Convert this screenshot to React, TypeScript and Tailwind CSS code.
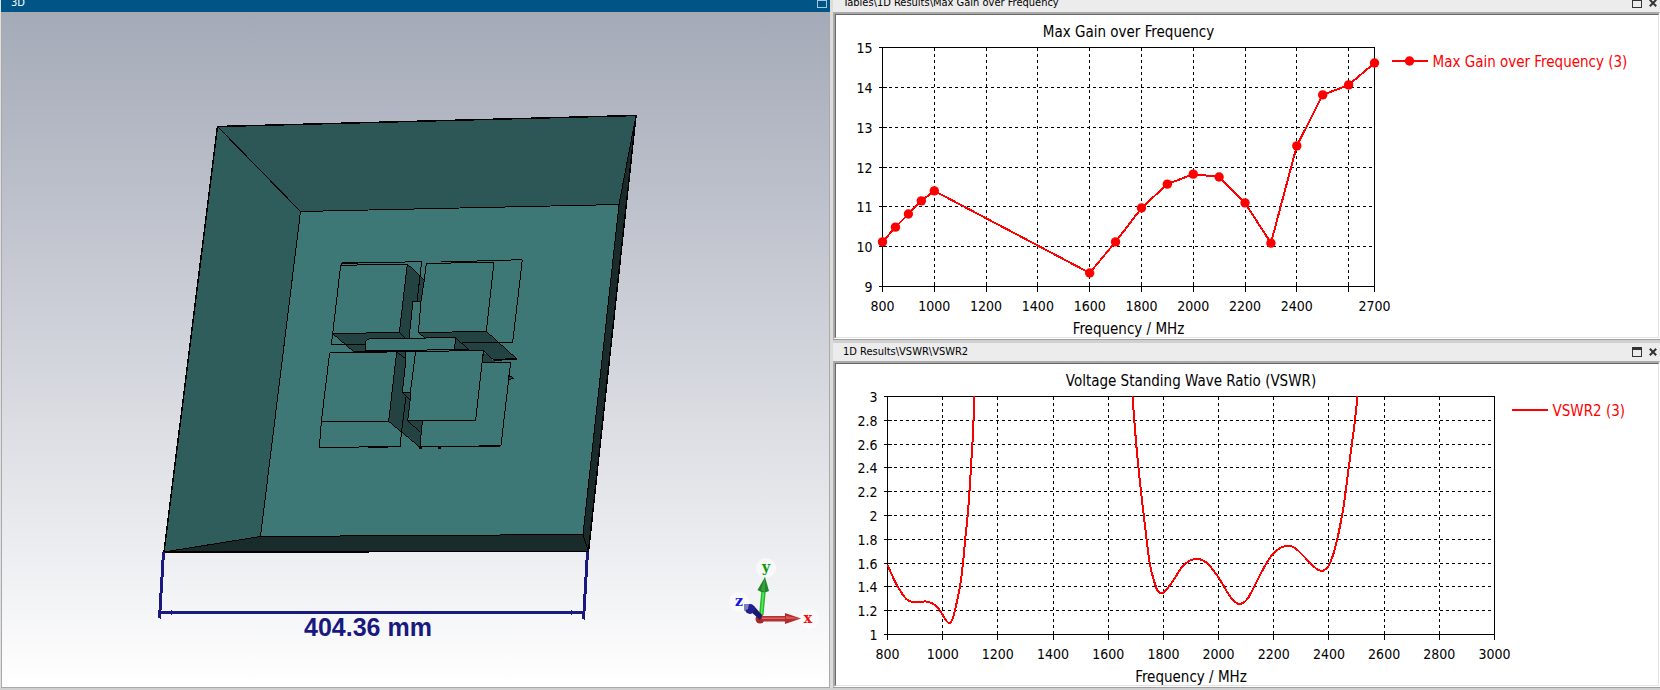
import type { ReactNode } from 'react';

type Point = [number, number];

interface ChartProps {
  title: string;
  legend: string;
  height: number;
  left: number;
  right: number;
  bottom: number;
  xRange: Point;
  yRange: Point;
  xGrid: number[];
  xLabels: number[];
  yTicks: number[];
  samples?: Point[];
  traces?: Point[][];
}

const TOP = 32.5;

const gainSamples: Point[] = [
  [800, 10.12], [850, 10.49], [900, 10.82], [950, 11.15], [1000, 11.4],
  [1600, 9.34], [1700, 10.12], [1800, 10.97], [1900, 11.57], [2000, 11.82],
  [2100, 11.75], [2200, 11.1], [2300, 10.09], [2400, 12.53], [2500, 13.81],
  [2600, 14.06], [2700, 14.61],
];

// VSWR traces, already in chart units
const vswrTraces: Point[][] = [
  [
    [51.5, 201], [59, 217.5], [66, 229.5], [71.5, 236], [77.5, 238], [84, 238],
    [90, 237.5], [97.5, 240], [104, 246.5], [109, 255], [113, 259], [116, 256],
    [119, 246], [124, 222.5], [127, 199], [129.5, 172.5], [132, 147.5],
    [134.2, 116], [136.6, 76], [138.5, 32.5],
  ],
  [
    [296.5, 32.5], [298.5, 59], [301, 89], [304, 119], [307.5, 149], [311, 179],
    [314, 201], [317.5, 215], [321, 225.5], [324, 229], [327, 229], [331, 225],
    [337.5, 216], [346, 203], [353, 197], [360.5, 195], [366, 196], [372.5, 200.5],
    [382.5, 213.5], [392.5, 230], [399, 238], [404.5, 240], [411, 235.5],
    [417.5, 224], [427.5, 204.5], [436, 191], [444, 184], [452.5, 182],
    [459, 184], [467.5, 192], [476, 201], [482.5, 206], [487.5, 206.5],
    [492.5, 202], [497.5, 189.5], [502.5, 169.5], [507.5, 143], [511.5, 113],
    [515.5, 83], [519, 56], [521.5, 32.5],
  ],
];

const range = (from: number, to: number, step: number) =>
  Array.from({ length: Math.round((to - from) / step) + 1 }, (_, i) => Number((from + i * step).toFixed(1)));

const snap = (v: number) => Math.round(v - 0.5) + 0.5;

// Catmull-Rom spline through the points
function smoothPath(points: Point[]) {
  return points.reduce((d, p, i) => {
    if (i === 0) return `M${p[0]} ${p[1]}`;
    const a = points[Math.max(i - 2, 0)];
    const b = points[i - 1];
    const c = points[Math.min(i + 1, points.length - 1)];
    return `${d}C${b[0] + (p[0] - a[0]) / 6} ${b[1] + (p[1] - a[1]) / 6} ${p[0] - (c[0] - b[0]) / 6} ${p[1] - (c[1] - b[1]) / 6} ${p[0]} ${p[1]}`;
  }, '');
}

function Chart({ title, legend, height, left, right, bottom, xRange, yRange, xGrid, xLabels, yTicks, samples, traces }: ChartProps) {
  const sx = (v: number) => left + ((v - xRange[0]) / (xRange[1] - xRange[0])) * (right - left);
  const sy = (v: number) => bottom - ((v - yRange[0]) / (yRange[1] - yRange[0])) * (bottom - TOP);
  const middle = (left + right) / 2;

  return (
    <svg
      viewBox={`0 0 822 ${height}`}
      role="img"
      aria-label={title}
      className="block h-auto w-full font-['DejaVu_Sans_Condensed','DejaVu_Sans',sans-serif] text-[14px]"
    >
      <g textAnchor="middle" className="text-[15px]">
        <text x={middle} y={22}>{title}</text>
        <text x={middle} y={bottom + 47}>Frequency / MHz</text>
      </g>

      <g stroke="#000" strokeWidth="1" fill="none" shapeRendering="crispEdges">
        {xGrid.map((v) => (
          <g key={v}>
            <path d={`M${snap(sx(v))} ${TOP}V${bottom}`} strokeDasharray="3 3" />
            <path d={`M${snap(sx(v))} ${bottom - 4}V${bottom + 5}`} />
          </g>
        ))}
        {yTicks.map((v) => (
          <g key={v}>
            <path d={`M${left} ${snap(sy(v))}H${right}`} strokeDasharray="3 3" />
            <path d={`M${left - 4} ${snap(sy(v))}H${left + 4}`} />
          </g>
        ))}
        <path d={`M${left} ${TOP}H${right}V${bottom}H${left}Z`} />
        <path d={`M${left} ${bottom}v5M${right} ${bottom}v5`} />
      </g>

      <g textAnchor="end">
        {yTicks.map((v) => (
          <text key={v} x={left - 10} y={snap(sy(v)) + 5.5}>{v}</text>
        ))}
      </g>
      <g textAnchor="middle">
        {xLabels.map((v) => (
          <text key={v} x={sx(v)} y={bottom + 24.5}>{v}</text>
        ))}
      </g>

      <g stroke="#f00" strokeWidth="2" fill="none" strokeLinejoin="round" shapeRendering="crispEdges">
        {samples && <polyline points={samples.map(([x, y]) => `${sx(x)},${sy(y)}`).join(' ')} />}
        {traces?.map((t) => <path key={t[0][0]} d={smoothPath(t)} />)}
        <path d={`M${right + 17} ${TOP + 13.5}h36`} />
      </g>
      <g fill="#f00">
        {samples?.map(([x, y]) => <circle key={x} cx={sx(x)} cy={sy(y)} r="4.7" />)}
        {samples && <circle cx={right + 35} cy={TOP + 13.5} r="4.7" />}
        <text x={right + 58} y={TOP + 19.5} className="text-[15px]">{legend}</text>
      </g>
    </svg>
  );
}

function MaximizeIcon() {
  return (
    <svg viewBox="0 0 10 10" className="h-[10px] w-[10px]" shapeRendering="crispEdges" aria-hidden="true">
      <path d="M.5 .5h9v9h-9z" fill="none" stroke="currentColor" />
      <path d="M0 0h10v3H0z" fill="currentColor" />
    </svg>
  );
}

function CloseIcon() {
  return (
    <svg viewBox="0 0 8 8" className="h-2 w-2" aria-hidden="true">
      <path d="M.8 .8l6.4 6.4M7.2 .8L.8 7.2" stroke="currentColor" strokeWidth="2" />
    </svg>
  );
}

function ResultPanel({ path, clipped, children }: { path: string; clipped?: boolean; children: ReactNode }) {
  return (
    <section className="border-b border-[#a0a0a0]">
      <header className={clipped ? 'flex h-3 items-end overflow-hidden bg-[#ececec]' : 'flex h-[18px] items-end bg-[#ececec]'}>
        <div className="flex h-[18px] w-full shrink-0 items-center justify-between pr-[3px] pl-[10px]">
          <h2 className="text-[11px] leading-4">{path}</h2>
          <div className="flex items-center gap-[7px] text-[#333]">
            <button type="button" aria-label="Maximize"><MaximizeIcon /></button>
            <button type="button" aria-label="Close"><CloseIcon /></button>
          </div>
        </div>
      </header>
      <div className="border-t-2 border-r border-b border-l-2 border-[#a9a9a9] border-r-white border-b-white">
        <div className="border border-[#e3e3e3] border-t-[#696969] border-l-[#696969] bg-white">{children}</div>
      </div>
    </section>
  );
}

function Antenna() {
  return (
    <g transform="translate(300 240) scale(.33333)" stroke="#000" strokeWidth="3" fill="none" shapeRendering="crispEdges">
      {/* dark side walls */}
      <g fill="#234343" stroke="none">
        <path d="M322 72L373 120L363 184H339L327 295H316L298 277Z" />
        <path d="M98 281L298 277L316 294L207 296L197 304V334H160Z" />
        <path d="M355 278L559 274L652 358L582 361L550 332L463 330L467 293H375Z" />
        <path d="M550 335L586 366H548Z" />
        <path d="M290 334H318V357L307 458H331V480L323 542H367L360 622L266 544Z" />
        <path d="M627 405L643 416L626 418Z" />
      </g>

      {/* upper left patch */}
      <path d="M124 76L322 72L298 277L98 281L122 76L126 70L365 65L351 184" />
      <path d="M126 68L290 67" />
      <path d="M322 72L373 120M359 105V135M298 277L316 294M98 281L94 313H197M98 281L160 334" />

      {/* upper right patch */}
      <path d="M379 70L455 69L582 67L559 274L355 278L363 184L373 120Z" />
      <path d="M424 66L602 61L667 59L638 307H487" />
      <path d="M355 278L375 294M559 274L652 358L582 361L550 332" />
      <path d="M582 359L652 357" strokeWidth="5" />

      {/* crossing bars */}
      <path d="M363 184H339L327 295" />
      <path d="M207 296L467 293L463 329L385 330L197 332V304Z" fill="#3d7877" />
      <path d="M385 329H463M467 293L506 329M463 329L504 330" />
      <path d="M160 334H347L550 332" />
      <path d="M318 334V357L307 458H331L347 334M307 458L331 480M331 458V480" />

      {/* lower left patch */}
      <path d="M89 338L262 337M290 336L266 544H64L89 338M290 336L318 357" />
      <path d="M64 544L58 622L300 620L304 580L318 470M266 544L360 622" />
      <path d="M204 621H264" strokeWidth="5" />

      {/* lower right patch */}
      <path d="M550 332L527 541L323 542L333 460M550 332L548 367H632L603 616L538 619H360L367 543M323 542L361 577" />
      <path d="M538 618H600M358 624H366M415 624H422" strokeWidth="5" />
      <path d="M627 405L643 416L626 418Z" />
    </g>
  );
}

function AxisTriad() {
  return (
    <g>
      <g fill="#fff" fillOpacity=".55">
        <circle cx="766" cy="568" r="10" />
        <circle cx="739" cy="602" r="10" />
        <circle cx="809" cy="619" r="10" />
      </g>
      <circle cx="760" cy="619" r="4.5" fill="#a62a2a" />
      <path d="M762 616h25v5.500h-25z" fill="#b23030" />
      <path d="M762 617.500h25v1.500h-25z" fill="#e06060" />
      <path d="M785 613L801 618.500L785 624Z" fill="#b42c2c" />
      <path d="M786 616L801 618.500L786 619Z" fill="#dd5555" />
      <path d="M759 615L761.500 589H766L763.500 615Z" fill="#27b82e" />
      <path d="M761.500 614L763.500 590" stroke="#55ee55" strokeWidth="1.500" />
      <path d="M757.500 590L765 577L769 591Q763 594 757.500 590Z" fill="#22852a" />
      <path d="M761 590L765 577L765 592Z" fill="#35a33b" />
      <path d="M748 609L760 620L762 615L754 606Z" fill="#191970" />
      <circle cx="750" cy="609" r="5" fill="#202090" />
      <path d="M744 604H749L748 609L744 611Z" fill="#8080bb" />
      <g className="font-['DejaVu_Serif',serif] text-[14px] font-bold" textAnchor="middle">
        <text x="766" y="572" fill="#0a9a0a">y</text>
        <text x="739" y="606" fill="#1414e0">z</text>
        <text x="808" y="623" fill="#f01010">x</text>
      </g>
    </g>
  );
}

function ModelView() {
  return (
    <svg viewBox="2 13 827 674" role="img" aria-label="3D model" className="block h-auto w-full">
      <g stroke="#000" strokeWidth="1" strokeLinejoin="round" shapeRendering="crispEdges">
        <path d="M217.500 126.500L636 115.500L619 204.500L300.500 211.500Z" fill="#2c5756" />
        <path d="M217.500 126.500L300.500 211.500L260.500 536.500L164 552Z" fill="#2f5d5c" />
        <path d="M164 552L260.500 536.500L583 534.500L588.500 551.500Z" fill="#192b2b" />
        <path d="M636 115.500L619 204.500L583 534.500L588.500 551.500Z" fill="#192b2b" />
        <path d="M300.500 211.500L619 204.500L583 534.500L260.500 536.500Z" fill="#3d7877" />
        <path d="M164 552L217.500 126.500L636 115.500L588.500 551.500Z" fill="none" strokeWidth="1.500" />
      </g>
      <Antenna />

      {/* width dimension */}
      <g stroke="#19197f" strokeWidth="3" shapeRendering="crispEdges">
        <path d="M163.500 552L159.500 618.500M587.500 552L583.500 619.500M160 612.500H584" />
        <path d="M171.500 610v5M571.500 610v5" strokeWidth="1" />
      </g>
      <text
        x="368"
        y="636"
        textAnchor="middle"
        fill="#19197f"
        className="font-['Liberation_Sans',Arial,sans-serif] text-[25px] font-bold"
      >
        404.36 mm
      </text>
      <AxisTriad />
    </svg>
  );
}

export default function App() {
  return (
    <main className="grid min-h-screen grid-cols-[830fr_3px_827fr] content-start bg-[#d0d0d0] font-['DejaVu_Sans_Condensed','DejaVu_Sans',sans-serif] text-black">
      <section className="flex flex-col border-l border-[#e0e0e0]">
        <header className="flex h-3 items-end overflow-hidden bg-[#005587] text-white">
          <div className="flex h-[18px] w-full shrink-0 items-center justify-between pr-[3px] pl-[10px]">
            <h1 className="text-[11px] leading-4">3D</h1>
            <button type="button" aria-label="Maximize" className="text-[#a9c8dc]"><MaximizeIcon /></button>
          </div>
        </header>
        <div className="flex-1 border border-[#a9a9a9] bg-linear-to-b from-[#a5aab8] to-white">
          <ModelView />
        </div>
      </section>

      <div className="bg-[#dcdcdc]" />

      <div className="flex flex-col gap-[3px]">
        <ResultPanel path="Tables\1D Results\Max Gain over Frequency" clipped>
          <Chart
            title="Max Gain over Frequency"
            legend="Max Gain over Frequency (3)"
            height={322}
            left={46.5}
            right={538.5}
            bottom={271.5}
            xRange={[800, 2700]}
            yRange={[9, 15]}
            xGrid={range(1000, 2600, 200)}
            xLabels={[...range(800, 2400, 200), 2700]}
            yTicks={range(9, 15, 1)}
            samples={gainSamples}
          />
        </ResultPanel>
        <ResultPanel path="1D Results\VSWR\VSWR2">
          <Chart
            title="Voltage Standing Wave Ratio (VSWR)"
            legend="VSWR2 (3)"
            height={321}
            left={51.5}
            right={658.5}
            bottom={270.5}
            xRange={[800, 3000]}
            yRange={[1, 3]}
            xGrid={range(1000, 2800, 200)}
            xLabels={range(800, 3000, 200)}
            yTicks={range(1, 3, 0.2)}
            traces={vswrTraces}
          />
        </ResultPanel>
      </div>
    </main>
  );
}
